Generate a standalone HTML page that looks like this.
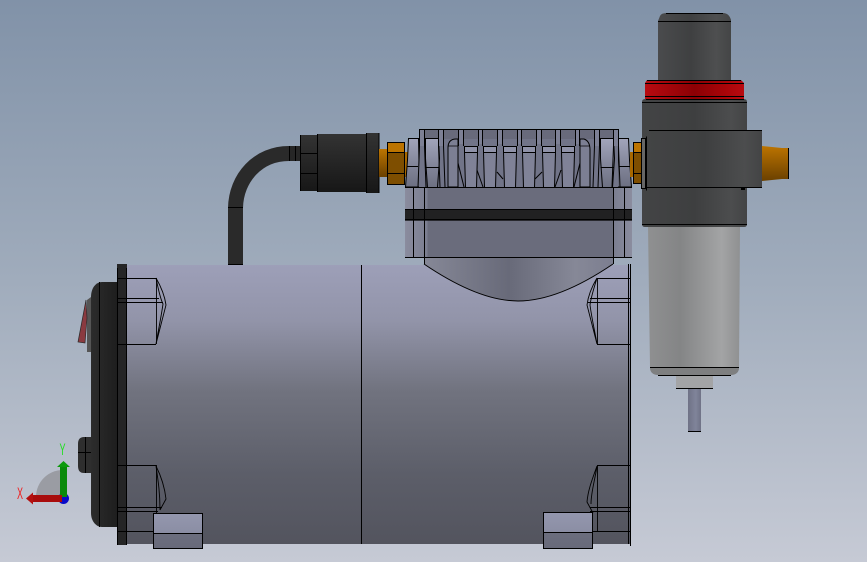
<!DOCTYPE html>
<html><head><meta charset="utf-8"><style>
html,body{margin:0;padding:0;width:867px;height:562px;overflow:hidden;background:#a0acbc}
svg{display:block}
text{font-family:"Liberation Sans",sans-serif}
</style></head><body>
<svg width="867" height="562" viewBox="0 0 867 562" xmlns="http://www.w3.org/2000/svg">
<defs>
<linearGradient id="bg" x1="0" y1="0" x2="0" y2="1"><stop offset="0" stop-color="#8192a8"/><stop offset=".5" stop-color="#a0acbc"/><stop offset="1" stop-color="#c6cad5"/></linearGradient>
<linearGradient id="motor" x1="0" y1="0" x2="0" y2="1"><stop offset="0" stop-color="#9d9fb8"/><stop offset=".2" stop-color="#9294a9"/><stop offset=".45" stop-color="#71737f"/><stop offset=".75" stop-color="#5c5e69"/><stop offset="1" stop-color="#53545e"/></linearGradient>
<linearGradient id="knob" x1="0" y1="0" x2="1" y2="0"><stop offset="0" stop-color="#4a4b4d"/><stop offset=".45" stop-color="#3f4041"/><stop offset=".8" stop-color="#4e4f50"/><stop offset="1" stop-color="#444546"/></linearGradient>
<linearGradient id="body" x1="0" y1="0" x2="1" y2="0"><stop offset="0" stop-color="#434445"/><stop offset=".5" stop-color="#3e3f40"/><stop offset=".85" stop-color="#4c4d4e"/><stop offset="1" stop-color="#434445"/></linearGradient>
<linearGradient id="red" x1="0" y1="0" x2="1" y2="0"><stop offset="0" stop-color="#b80a10"/><stop offset=".5" stop-color="#8c0004"/><stop offset=".8" stop-color="#a80408"/><stop offset="1" stop-color="#b80a10"/></linearGradient>
<linearGradient id="orange" x1="0" y1="0" x2="0" y2="1"><stop offset="0" stop-color="#bc7400"/><stop offset="1" stop-color="#6a4000"/></linearGradient>
<linearGradient id="bowl" x1="0" y1="0" x2="1" y2="0"><stop offset="0" stop-color="#8f9091"/><stop offset=".35" stop-color="#848586"/><stop offset=".8" stop-color="#a3a4a5"/><stop offset="1" stop-color="#8f9091"/></linearGradient>
<linearGradient id="conn" x1="0" y1="0" x2="0" y2="1"><stop offset="0" stop-color="#333"/><stop offset="1" stop-color="#171717"/></linearGradient>
<linearGradient id="stem" x1="0" y1="0" x2="1" y2="0"><stop offset="0" stop-color="#6f7286"/><stop offset=".6" stop-color="#80849a"/><stop offset="1" stop-color="#6f7286"/></linearGradient>
<linearGradient id="head" x1="0" y1="0" x2="1" y2="0"><stop offset="0" stop-color="#8a8c9e"/><stop offset=".1" stop-color="#7b7e90"/><stop offset=".085" stop-color="#6a6c7c"/><stop offset=".915" stop-color="#6a6c7c"/><stop offset=".92" stop-color="#7b7e90"/><stop offset="1" stop-color="#8a8c9e"/></linearGradient>
<linearGradient id="dome" x1="0" y1="0" x2="1" y2="0"><stop offset="0" stop-color="#868897"/><stop offset=".45" stop-color="#686a79"/><stop offset=".8" stop-color="#868897"/><stop offset="1" stop-color="#7c7e90"/></linearGradient>
<linearGradient id="fin" x1="0" y1="0" x2="0" y2="1"><stop offset="0" stop-color="#a2a5bb"/><stop offset=".5" stop-color="#85889c"/><stop offset="1" stop-color="#6d7082"/></linearGradient>
<linearGradient id="fin3" x1="0" y1="0" x2="0" y2="1"><stop offset="0" stop-color="#7f8296"/><stop offset="1" stop-color="#808398"/></linearGradient>
<linearGradient id="foot" x1="0" y1="0" x2="0" y2="1"><stop offset="0" stop-color="#9497ae"/><stop offset=".55" stop-color="#8b8ea4"/><stop offset=".56" stop-color="#6c6e7e"/><stop offset="1" stop-color="#686a7a"/></linearGradient>
<linearGradient id="cap" x1="0" y1="0" x2="1" y2="0"><stop offset="0" stop-color="#2c2c2c"/><stop offset="1" stop-color="#1e1e1e"/></linearGradient>
<g id="fin1"><path d="M0 0H13L14 20 12 49H2L0 20Z" fill="url(#fin)" stroke="#000"/><path d="M0 29H13.500" stroke="#000"/></g>
<g id="fin2"><path d="M0 8H13V14L12 49H1L0 14Z" fill="url(#fin3)" stroke="#000"/><path d="M0 8H13V14H0Z" fill="#8f92a8" stroke="#000"/></g>
</defs>
<rect width="867" height="562" fill="url(#bg)"/>

<!-- triad -->
<path d="M63 497V470A27 27 0 0 0 36 497Z" fill="#9a9ca3"/>
<circle cx="63.500" cy="498.500" r="5.500" fill="#0a0ac8"/>
<path d="M60 467H67V497H60Z" fill="#0a8a0a"/><path d="M57 467L63.500 461 70 467Z" fill="#0c9a0c"/>
<path d="M33 495H62V502H33Z" fill="#a80c0c"/><path d="M33 492.500V504.500L26 498.500Z" fill="#b41010"/>
<text transform="translate(62.500 455) scale(.55 1)" font-size="16.500" fill="#20e020" text-anchor="middle">Y</text>
<text transform="translate(20 499) scale(.55 1)" font-size="16.500" fill="#f02020" text-anchor="middle">X</text>

<!-- cable -->
<path d="M235.500 264V208C236 178 258 153 290 153.500" fill="none" stroke="#2a2a2a" stroke-width="15"/>
<path d="M228 207.500H243M228 264.500H243" stroke="#000" fill="none"/>
<rect x="289" y="146" width="12" height="15" fill="#262626"/>
<path d="M289.500 146V161M295.500 146V161" stroke="#000"/>
<rect x="300" y="135" width="17" height="56" fill="url(#conn)"/>
<rect x="317" y="134" width="49" height="58" fill="url(#conn)"/>
<rect x="366" y="133" width="13" height="60" fill="url(#conn)"/>
<path d="M300.500 135V191M317.500 134V192M366.500 133V193M379 133V193M300 153.500H317M300 173.500H317" stroke="#000"/>
<rect x="379" y="149" width="9" height="28" fill="url(#orange)"/>
<rect x="404" y="152" width="4" height="25" fill="#a86800"/>
<rect x="387.500" y="142.500" width="17" height="42" fill="#7e4e00" stroke="#000"/>
<rect x="388" y="143" width="16" height="9.500" fill="#bc7400"/>
<path d="M387 152.500H405M387 173.500H405" stroke="#000"/>

<!-- motor -->
<rect x="127" y="265" width="503" height="279" fill="url(#motor)"/>
<path d="M361.500 265V544M628.500 264V544M630.500 264V546" stroke="#000"/>

<!-- dome -->
<path d="M424 257H613V264C585 283 550 301 518 301 487 301 452 283 424 264Z" fill="url(#dome)"/>
<path d="M424 264C452 283 487 301 518 301 550 301 585 283 613 264" fill="none" stroke="#000"/>

<!-- head lower -->
<rect x="405" y="187" width="227" height="70" fill="url(#head)"/>
<rect x="405" y="209" width="227" height="11" fill="#212122"/>
<path d="M405 209.500H632" stroke="#000"/><path d="M405 219.800H632" stroke="#000" stroke-width="1.600"/>
<path d="M405 257.500H632M413.500 187V257M424.500 187V264M613.500 187V264M624.500 187V257" stroke="#000"/>

<!-- head top -->
<rect x="419.500" y="129.500" width="198" height="10" fill="#686a7b" stroke="#000"/>
<path d="M408.500 138.500H418.500L419.500 187H405.500L407.500 160Z" fill="url(#fin)" stroke="#000"/>
<path d="M628.500 138.500H618.500L617.500 187H631.500L629.500 160Z" fill="url(#fin)" stroke="#000"/>
<path d="M407 166.500H418M619 166.500H630" stroke="#000"/>
<rect x="419" y="139" width="199" height="48" fill="#717488"/>
<use href="#fin1" x="425.500" y="138.500"/>
<use href="#fin1" x="600.500" y="138.500"/>
<use href="#fin2" x="464.500" y="138.500"/>
<use href="#fin2" x="483.500" y="138.500"/>
<use href="#fin2" x="503.500" y="138.500"/>
<use href="#fin2" x="522.500" y="138.500"/>
<use href="#fin2" x="542.500" y="138.500"/>
<use href="#fin2" x="561.500" y="138.500"/>
<path d="M448 148Q448 139 456 139H458V187H448ZM580 139H584Q590 141 590 150V187H580Z" fill="#7c7f93" stroke="#000"/>
<path d="M448 146H458M580 146H590" stroke="#000" stroke-width=".7"/>
<path d="M458 163L464 187M477 170L483 187M497 172L503 179M535 179L542 172M555 187L561 170M574 187L580 163" stroke="#000" fill="none"/>
<path d="M405 187.500H632" stroke="#000"/>
<g fill="#7d8095"><rect x="420" y="130" width="4" height="16"/><rect x="439" y="130" width="4" height="16"/><rect x="459" y="130" width="4" height="14"/><rect x="479" y="130" width="3" height="14"/><rect x="498" y="130" width="4" height="14"/><rect x="518" y="130" width="3" height="14"/><rect x="537" y="130" width="4" height="14"/><rect x="556" y="130" width="4" height="14"/><rect x="576" y="130" width="3" height="14"/><rect x="595" y="130" width="4" height="16"/><rect x="614" y="130" width="4" height="16"/></g>
<path d="M419.500 129V146L418 187M424.500 129V146L426 187M438.500 129V146L440 187M443.500 129V146L445 187M458.500 129V146M463.500 129V146M478.500 129V146M482.500 129V146M497.500 129V146M502.500 129V146M517.500 129V146M521.500 129V146M536.500 129V146M541.500 129V146M555.500 129V146M560.500 129V146M575.500 129V146M579.500 129V146M594.500 129V146L593 187M599.500 129V146L598 187M613.500 129V146L612 187M618.500 129V146L620 187" stroke="#000" fill="none"/>

<!-- right nut -->
<rect x="630" y="152" width="4" height="25" fill="#a86800"/>
<rect x="633.500" y="142.500" width="8" height="41" fill="#7e4e00" stroke="#000"/>
<rect x="634" y="143" width="7" height="9" fill="#bc7400"/>
<path d="M633 152.500H641M633 173.500H641" stroke="#000"/>

<!-- filter -->
<path d="M648 226H740L739 367H650Z" fill="url(#bowl)"/>
<path d="M650 367H739V368C739 372 736 375 731 375H658C653 375 650 372 650 368Z" fill="#7e7f80"/>
<path d="M650 367.500H739M658 375.500H731" stroke="#000"/>
<rect x="676" y="376" width="37" height="12" fill="#a3a4a6"/>
<path d="M676 388.500H713" stroke="#000"/>
<rect x="688" y="389" width="13" height="42" fill="url(#stem)"/>
<path d="M688 431.500H701" stroke="#000"/>
<path d="M642 102Q642 99 645 99H744Q747 99 747 102V224Q747 227 744 227H645Q642 227 642 224Z" fill="url(#body)"/>
<path d="M642 102.500H747M642 224.500H747" stroke="#000"/>
<rect x="647" y="130" width="115" height="57.500" fill="url(#body)"/>
<path d="M649 130.500H762M647 187.500H762" stroke="#000"/>
<path d="M762 146L782 148H789V179H782L762 181Z" fill="url(#orange)"/>
<path d="M788.500 148V179" stroke="#000"/>
<rect x="641.500" y="138.500" width="4" height="50" fill="#666" stroke="#000"/>
<path d="M646.500 136.500V190.500" stroke="#000"/>
<rect x="741" y="187" width="4" height="3" fill="#000"/>
<path d="M658 21L660 16Q661 13 667 13H723Q729 13 731 20V80H658Z" fill="url(#knob)"/>
<path d="M666 13.500H723M658 21.500H731" stroke="#000"/>
<path d="M647 80H741L744 83V99H645V83Z" fill="url(#red)"/>
<path d="M647 80.500H741M645 83.500H744M645 96.500H744M646 99.500H744" stroke="#000"/>

<!-- motor front -->
<path d="M117 282H102C96 282 91 288 91 297V513C91 521 96 527 102 527H117Z" fill="url(#cap)"/>
<path d="M99.500 282V527" stroke="#000"/>
<rect x="117" y="264" width="10" height="281" fill="#252526"/>
<path d="M117.500 268V545M126.500 268V545" stroke="#000"/>
<path d="M91 297L87 300V352H91Z" fill="#555"/>
<path d="M86 300L78 342L85 343L87 318Z" fill="#8a3a40" stroke="#2a2a2a" stroke-width=".7"/>
<path d="M91 437H84Q78 437 78 444V466Q78 473 84 473H91Z" fill="#2e2e2e"/>
<path d="M78 452.500H91M85.500 437V473" stroke="#000"/>

<!-- bolts -->
<g fill="none" stroke="#000" stroke-width=".9">
<path d="M117 278.500H156M117 298.500H159M117 302.500H163M117 344.500H156M156.500 278V344"/>
<path d="M156 278C163 290 165 298 166 305L156 344M156 278C158 288 160 298 163 304C161 318 158 332 156 344"/>
<path d="M117 465.500H156M117 507.500H162M117 511.500H158M117 531.500H153M156.500 465V513"/>
<path d="M156 466C162 478 165 490 166 499L160 510M156 466C158 480 160 492 160 510"/>
<path d="M597 278.500H630M590 298.500H630M588 302.500H630M597 344.500H630M597.500 278V344"/>
<path d="M597 278C591 288 588 297 587 305L597 344M597 278C594 288 591 297 590 305C592 320 595 332 597 344"/>
<path d="M597 465.500H630M590 507.500H630M590 511.500H630M593 531.500H630M597.500 465V531"/>
<path d="M597 466C592 480 588 490 587 502L593 513M597 466C595 480 591 492 591 504"/>
</g>

<!-- feet -->
<rect x="153.500" y="513.500" width="49" height="35" fill="url(#foot)" stroke="#000"/>
<path d="M153 533.500H203" stroke="#000"/>
<rect x="543.500" y="512.500" width="49" height="36" fill="url(#foot)" stroke="#000"/>
<path d="M543 532.500H593" stroke="#000"/>
</svg>
</body></html>
